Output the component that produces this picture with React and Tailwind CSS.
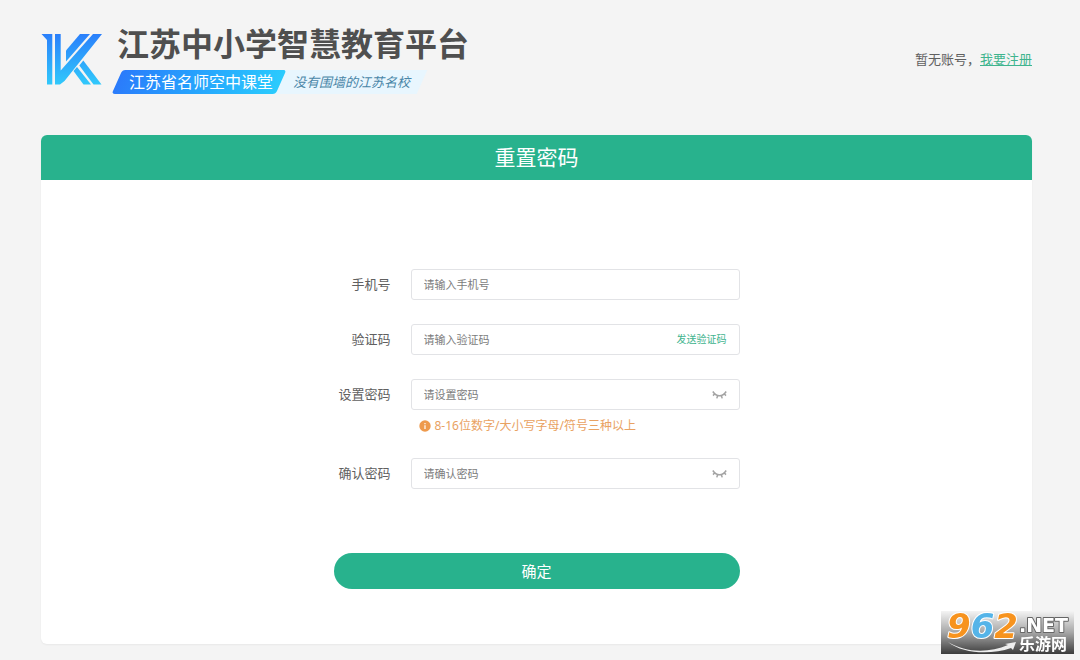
import React from 'react';

const closedEyePath = 'M0.800 1.500C3 4.800 5 5.800 7.500 5.800S12 4.800 14.200 1.500M2.600 4L1 5.600M5.600 5.700L4.800 8.400M9.400 5.700L10.200 8.400M12.400 4L14 5.600';

function Logo() {
  return (
    <svg className="h-[54px] w-[62px] shrink-0" viewBox="0 0 62 54" aria-hidden="true">
      <defs>
        <linearGradient id="logoFill" x1="0" y1="0" x2="0" y2="54" gradientUnits="userSpaceOnUse">
          <stop offset="0" stopColor="#2a7cfb" />
          <stop offset="1" stopColor="#31cbfb" />
        </linearGradient>
      </defs>
      <g fill="url(#logoFill)">
        <path d="M0.500 2H11.300V52.500H6V8Z" />
        <path d="M14 2H19.700V38.500L52 2H61L23.500 49L19 52.500H14Z" />
        <path d="M25 18.500L39 2H49L25 29.500Z" />
        <path d="M38.300 33.500L42.300 28.500L60.500 52.500H52.500Z" />
        <path d="M32.500 39L36 35L50 52.500H42.500Z" />
      </g>
    </svg>
  );
}

// Brand block: logo, platform name and the two slanted ribbons
function Brand() {
  return (
    <div className="flex items-start gap-[14px]">
      <div className="pt-[6px]">
        <Logo />
      </div>
      <div>
        <h1 className="text-[32px] leading-9 font-bold text-[#4f4f4f]">江苏中小学智慧教育平台</h1>
        <div className="mt-2 flex">
          <p className="relative z-10 pr-2 pl-3 text-[16px] leading-6 text-white before:absolute before:inset-0 before:-z-10 before:-skew-x-[24deg] before:rounded-[3px] before:bg-linear-to-r before:from-[#2b7bfb] before:to-[#2bcbfd]">
            江苏省名师空中课堂
          </p>
          <p className="relative isolate px-3 text-[13px] leading-6 text-[#4a86a8] italic before:absolute before:inset-y-0 before:right-0 before:-left-2 before:-z-10 before:-skew-x-[24deg] before:bg-[#e8f6fe]">
            没有围墙的江苏名校
          </p>
        </div>
      </div>
    </div>
  );
}

function EyeButton({ label }) {
  return (
    <button type="button" aria-label={label} className="shrink-0 cursor-pointer">
      <svg className="h-[10px] w-[15px]" viewBox="0 0 15 10" fill="none" stroke="#a3a3a3" strokeWidth="1.500">
        <path d={closedEyePath} />
      </svg>
    </button>
  );
}

function Field({ id, label, type = 'text', placeholder, hint, children }) {
  return (
    <div className="flex gap-5">
      <label htmlFor={id} className="w-[57px] shrink-0 text-right text-[13px] leading-[31px] text-[#606060]">
        {label}
      </label>
      <div className="min-w-0 flex-1">
        <div className="flex h-[31px] items-center rounded-[3px] border border-[#e2e3e6] px-3">
          <input
            id={id}
            type={type}
            placeholder={placeholder}
            className="h-full min-w-0 flex-1 bg-transparent text-[11px] text-[#606060] outline-none placeholder:text-[#7c7c7c]"
          />
          {children}
        </div>
        {hint}
      </div>
    </div>
  );
}

function PasswordHint() {
  return (
    <p className="mt-2 flex items-center gap-1 pl-2 text-[12px] leading-4 text-[#e9a262]">
      <svg className="h-3 w-3 shrink-0" viewBox="0 0 12 12" aria-hidden="true">
        <circle cx="6" cy="6" r="5.700" fill="#ee9a4d" />
        <path d="M6 3V4.200M6 5.200V9" stroke="#fff" strokeWidth="1.200" />
      </svg>
      8-16位数字/大小写字母/符号三种以上
    </p>
  );
}

function ResetForm() {
  return (
    <form className="mx-auto flex w-full max-w-[406px] flex-col gap-6" onSubmit={(e) => e.preventDefault()}>
      <Field id="phone" label="手机号" placeholder="请输入手机号" />
      <Field id="code" label="验证码" placeholder="请输入验证码">
        <button type="button" className="shrink-0 cursor-pointer text-[10px] text-[#3fb48e]">
          发送验证码
        </button>
      </Field>
      <Field id="password" label="设置密码" type="password" placeholder="请设置密码" hint={<PasswordHint />}>
        <EyeButton label="显示密码" />
      </Field>
      <Field id="confirm" label="确认密码" type="password" placeholder="请确认密码">
        <EyeButton label="显示确认密码" />
      </Field>
      <button type="submit" className="mt-10 h-9 w-full cursor-pointer rounded-full bg-[#28b28d] text-[15px] text-white">
        确定
      </button>
    </form>
  );
}

// Site badge pinned to the corner of the window
function SiteBadge() {
  return (
    <svg
      className="fixed right-[6px] bottom-[6px] h-[43px] w-[133px] overflow-visible"
      viewBox="0 0 133 43"
      role="img"
      aria-label="962.NET 乐游网"
    >
      <defs>
        <linearGradient id="badgeBg" x1="0" y1="0" x2="0" y2="1">
          <stop offset="0" stopColor="#f4f4f4" />
          <stop offset="0.500" stopColor="#a6a6a6" />
          <stop offset="1" stopColor="#3c3c3c" />
        </linearGradient>
      </defs>
      <rect width="133" height="43" fill="url(#badgeBg)" />
      <path d="M7 31C25 42 48 42 67 34L64 33L75 31L72 39L70 37C50 44 22 43 7 31Z" fill="#eeeeee" />
      <g
        fontFamily="DejaVu Sans, sans-serif"
        fontWeight="700"
        stroke="#fff"
        strokeWidth="2"
        strokeLinejoin="round"
        paintOrder="stroke"
      >
        <text x="6" y="27" fontSize="34" fontStyle="italic">
          <tspan fill="#f7931e">9</tspan>
          <tspan fill="#55b4e8">6</tspan>
          <tspan fill="#f7931e">2</tspan>
        </text>
        <text x="78" y="21" fontSize="19" fill="#fff" stroke="#666666">.NET</text>
      </g>
      <text x="78" y="39" fontSize="16" fontWeight="700" fontFamily="Liberation Sans, Noto Sans CJK SC, sans-serif" fill="#fff">
        乐游网
      </text>
    </svg>
  );
}

export default function App() {
  return (
    <div className="min-h-screen bg-[#f4f4f4] pr-12 pb-4 pl-[41px] font-['Noto_Sans','Noto_Sans_CJK_SC',sans-serif]">
      <header className="flex h-[135px] items-start justify-between pt-[26px]">
        <Brand />
        <p className="pt-[23px] text-[13px] leading-5 text-[#606060]">
          暂无账号，
          <a href="#register" className="text-[#3fb48e] underline">我要注册</a>
        </p>
      </header>
      <main className="overflow-hidden rounded-md bg-white shadow-xs">
        <h2 className="bg-[#28b28d] text-center text-[21px] leading-[45px] text-white">重置密码</h2>
        <div className="px-6 pt-[89px] pb-[55px]">
          <ResetForm />
        </div>
      </main>
      <SiteBadge />
    </div>
  );
}
